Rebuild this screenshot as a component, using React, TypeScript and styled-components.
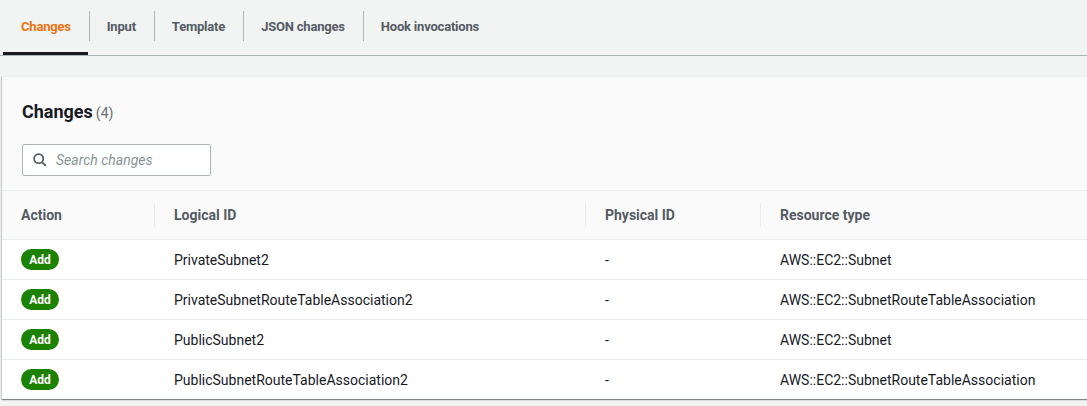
import React from "react";
import styled, { createGlobalStyle } from "styled-components";

const GlobalStyle = createGlobalStyle`
  html, body {
    margin: 0;
    padding: 0;
    background: #f2f3f3;
    font-family: Roboto, "Liberation Sans", Arial, sans-serif;
    color: #16191f;
    overflow: hidden;
  }
`;

const Page = styled.div`
  width: 1087px;
  height: 406px;
  display: flex;
  flex-direction: column;
`;

const TabBar = styled.div`
  display: flex;
  height: 55px;
  padding-left: 3px;
  border-bottom: 1px solid #aab7b8;
`;

const Tab = styled.div<{ $active?: boolean; $first?: boolean }>`
  position: relative;
  display: flex;
  align-items: center;
  padding: 0 18px 3px 18px;
  font-size: 13px;
  letter-spacing: -0.2px;
  font-weight: 700;
  color: ${(p) => (p.$active ? "#ec7211" : "#545b64")};
  &::before {
    content: "";
    display: ${(p) => (p.$first ? "none" : "block")};
    position: absolute;
    left: 0;
    top: 11px;
    height: 30px;
    border-left: 1px solid #aab7b8;
  }
  &::after {
    content: "";
    display: ${(p) => (p.$active ? "block" : "none")};
    position: absolute;
    left: 0;
    right: 1px;
    bottom: 0;
    height: 3px;
    background: #16191f;
  }
`;

const Panel = styled.div`
  margin: 20px -4px 0 2px;
  background: #fff;
  border-top: 1px solid #eaeded;
  box-shadow: 0 1px 1px 0 rgba(0, 28, 36, 0.3),
    1px 1px 1px 0 rgba(0, 28, 36, 0.15), -1px 1px 1px 0 rgba(0, 28, 36, 0.15);
`;

const PanelHeader = styled.div`
  background: #fafafa;
  padding: 23px 20px 14px 20px;
  border-bottom: 1px solid #eaeded;
  display: flex;
  flex-direction: column;
  gap: 20px;
`;

const Title = styled.h2`
  margin: 0;
  font-size: 18px;
  line-height: 22px;
  font-weight: 700;
  color: #16191f;
  padding-top: 1px;
`;

const Count = styled.span`
  font-size: 14px;
  font-weight: 400;
  color: #687078;
  margin-left: 3px;
`;

const Search = styled.label`
  display: flex;
  align-items: center;
  gap: 9px;
  width: 189px;
  height: 32px;
  box-sizing: border-box;
  padding: 0 10px;
  background: #fff;
  border: 1px solid #aab7b8;
  border-radius: 2px;
`;

const SearchInput = styled.input`
  border: none;
  outline: none;
  background: transparent;
  width: 140px;
  padding: 0;
  font-family: inherit;
  font-size: 14px;
  color: #16191f;
  &::placeholder {
    color: #879596;
    font-style: italic;
  }
`;

const Row = styled.div<{ $head?: boolean }>`
  display: grid;
  grid-template-columns: 152px 431px 175px 1fr;
  height: ${(p) => (p.$head ? "48px" : "39px")};
  background: ${(p) => (p.$head ? "#fafafa" : "#fff")};
  border-bottom: 1px solid #eaeded;
  &:last-child {
    border-bottom: none;
  }
`;

const HeadCell = styled.div<{ $first?: boolean }>`
  position: relative;
  display: flex;
  align-items: center;
  padding-left: ${(p) => (p.$first ? "19px" : "20px")};
  font-size: 14px;
  font-weight: 700;
  color: #545b64;
  &::before {
    content: "";
    display: ${(p) => (p.$first ? "none" : "block")};
    position: absolute;
    left: 0;
    top: 12px;
    height: 24px;
    border-left: 1px solid #eaeded;
  }
`;

const Cell = styled.div<{ $first?: boolean }>`
  display: flex;
  align-items: center;
  padding-left: ${(p) => (p.$first ? "19px" : "20px")};
  font-size: 14px;
  color: #16191f;
  white-space: nowrap;
`;

const Badge = styled.span`
  display: inline-flex;
  align-items: center;
  justify-content: center;
  height: 21px;
  width: 38px;
  border-radius: 11px;
  background: #1d8102;
  color: #fff;
  font-size: 12px;
  font-weight: 700;
`;

const SearchIcon = () => (
  <svg width="14" height="14" viewBox="0 0 16 16" fill="none">
    <circle cx="6.5" cy="6.5" r="5.2" stroke="#545b64" strokeWidth="2" />
    <path d="M10.3 10.3L14.8 14.8" stroke="#545b64" strokeWidth="2" />
  </svg>
);

const tabs = ["Changes", "Input", "Template", "JSON changes", "Hook invocations"];

const changes = [
  { id: "PrivateSubnet2", type: "AWS::EC2::Subnet" },
  { id: "PrivateSubnetRouteTableAssociation2", type: "AWS::EC2::SubnetRouteTableAssociation" },
  { id: "PublicSubnet2", type: "AWS::EC2::Subnet" },
  { id: "PublicSubnetRouteTableAssociation2", type: "AWS::EC2::SubnetRouteTableAssociation" },
];

const App: React.FC = () => {
  return (
    <>
      <GlobalStyle />
      <Page>
        <TabBar>
          {tabs.map((t, i) => (
            <Tab key={t} $active={i === 0} $first={i === 0}>
              {t}
            </Tab>
          ))}
        </TabBar>

        <Panel>
          <PanelHeader>
            <Title>
              Changes<Count>(4)</Count>
            </Title>
            <Search>
              <SearchIcon />
              <SearchInput placeholder="Search changes" />
            </Search>
          </PanelHeader>

          <Row $head>
            <HeadCell $first>Action</HeadCell>
            <HeadCell>Logical ID</HeadCell>
            <HeadCell>Physical ID</HeadCell>
            <HeadCell>Resource type</HeadCell>
          </Row>
          {changes.map((c) => (
            <Row key={c.id}>
              <Cell $first>
                <Badge>Add</Badge>
              </Cell>
              <Cell>{c.id}</Cell>
              <Cell>-</Cell>
              <Cell>{c.type}</Cell>
            </Row>
          ))}
        </Panel>
      </Page>
    </>
  );
};

export default App;
